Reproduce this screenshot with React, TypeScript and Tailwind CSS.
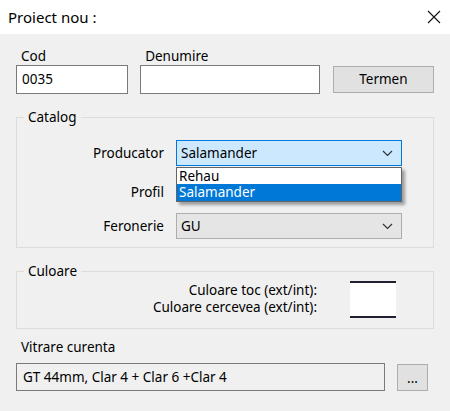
const font = "font-['Segoe_UI','Noto_Sans',Arial,sans-serif]";

function Combo({ value, active }: { value: string; active?: boolean }) {
    return (
        <div
            className={
                "flex items-center justify-between w-[226px] h-[26px] pl-[4px] pr-[8px] border " +
                (active ? "bg-[#cce8ff] border-[#0078d7]" : "bg-[#e5e5e5] border-[#adadad]")
            }
        >
            <span>{value}</span>
            <svg width="11" height="7" viewBox="0 0 11 7" fill="none" stroke="#333" strokeWidth="1.2">
                <path d="M1 1l4.5 4.5L10 1" />
            </svg>
        </div>
    );
}

function GroupBox({ title, className, children }: { title: string; className?: string; children: React.ReactNode }) {
    return (
        <div className={"relative border border-[#dcdcdc] " + (className ?? "")}>
            <span className="absolute -top-[10px] left-[7px] px-[4px] bg-[#f0f0f0] leading-[18px]">{title}</span>
            {children}
        </div>
    );
}

export default function App() {
    return (
        <div className={`w-[450px] h-[411px] bg-[#f0f0f0] text-[13.5px] text-black ${font}`}>
            {/* bara de titlu */}
            <div className="flex items-center justify-between h-[34px] bg-white pl-[8px] pr-[8px]">
                <span className="text-[15px]">Proiect nou :</span>
                <svg width="14" height="14" viewBox="0 0 14 14" stroke="#111" strokeWidth="1.1" className="mr-[1px]">
                    <path d="M1 1l12 12M13 1L1 13" />
                </svg>
            </div>

            <div className="px-[16px]">
                {/* cod / denumire */}
                <div className="flex items-end pt-[14px]">
                    <div className="flex flex-col w-[113px]">
                        <span className="pl-[5px] leading-[17px]">Cod</span>
                        <div className="h-[29px] bg-white border border-[#7a7a7a] pl-[5px] leading-[27px]">0035</div>
                    </div>
                    <div className="flex flex-col w-[181px] ml-[12px]">
                        <span className="pl-[5px] leading-[17px]">Denumire</span>
                        <div className="h-[29px] bg-white border border-[#7a7a7a]" />
                    </div>
                    <button className="ml-[13px] mb-[1px] w-[102px] h-[27px] bg-[#e1e1e1] border border-[#adadad]">
                        Termen
                    </button>
                </div>

                {/* catalog */}
                <GroupBox title="Catalog" className="mt-[23px] h-[131px]">
                    <div className="flex flex-col pt-[22px] gap-[10px]">
                        <div className="flex items-center">
                            <span className="w-[147px] text-right">Producator</span>
                            <div className="relative ml-[12px]">
                                <Combo value="Salamander" active />
                                <div className="absolute top-[27px] left-0 w-[226px] border border-[#646464] bg-white shadow-[3px_3px_3px_rgba(0,0,0,0.35)]">
                                    <div className="h-[16px] pl-[2px] leading-[16px]">Rehau</div>
                                    <div className="h-[17px] pl-[2px] leading-[17px] bg-[#0078d7] text-white">Salamander</div>
                                </div>
                            </div>
                        </div>
                        <div className="flex items-center h-[26px] mt-[1px]">
                            <span className="w-[147px] text-right pt-[5px]">Profil</span>
                        </div>
                        <div className="flex items-center">
                            <span className="w-[147px] text-right">Feronerie</span>
                            <div className="ml-[12px]">
                                <Combo value="GU" />
                            </div>
                        </div>
                    </div>
                </GroupBox>

                {/* culoare */}
                <GroupBox title="Culoare" className="mt-[23px] h-[58px]">
                    <div className="flex items-start pt-[9px]">
                        <div className="flex flex-col items-end w-[300px] pt-[1px] leading-[17px]">
                            <span>Culoare toc (ext/int):</span>
                            <span>Culoare cercevea (ext/int):</span>
                        </div>
                        <div className="ml-[33px] w-[46px] h-[37px] bg-white border-y-2 border-[#202030]" />
                    </div>
                </GroupBox>

                {/* vitrare */}
                <div className="mt-[10px] pl-[5px] leading-[17px]">Vitrare curenta</div>
                <div className="flex items-center mt-[7px]">
                    <div className="w-[369px] h-[28px] border border-[#7a7a7a] bg-[#f0f0f0] pl-[6px] leading-[26px]">
                        GT 44mm, Clar 4 + Clar 6 +Clar 4
                    </div>
                    <button className="ml-[12px] w-[31px] h-[27px] bg-[#e1e1e1] border border-[#adadad] leading-none pt-[4px]">
                        ...
                    </button>
                </div>
            </div>
        </div>
    );
}
